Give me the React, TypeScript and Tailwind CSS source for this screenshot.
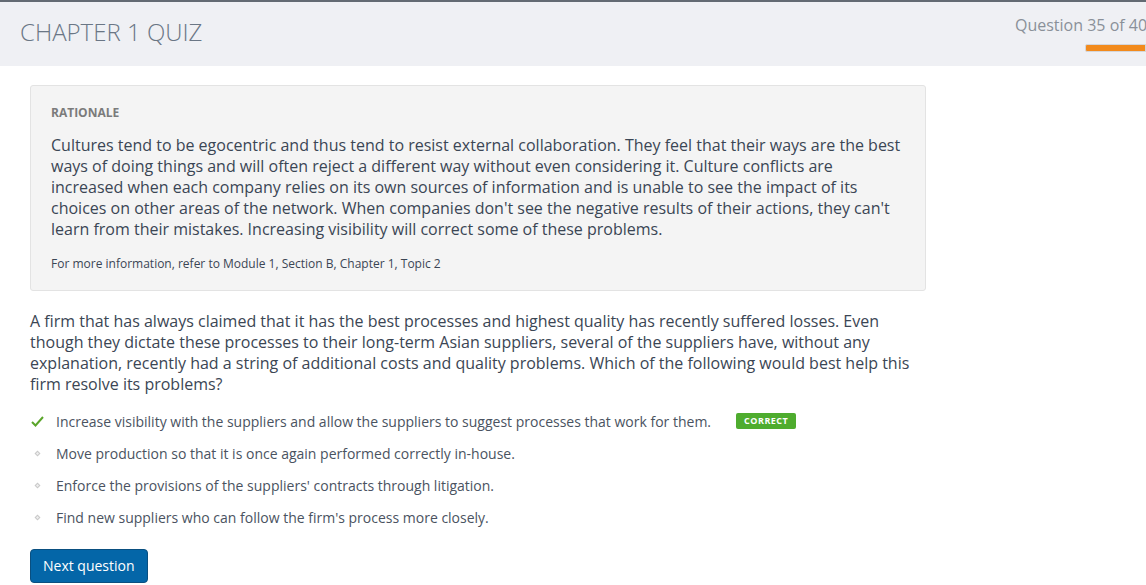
import React from "react";

const options = [
  { text: "Increase visibility with the suppliers and allow the suppliers to suggest processes that work for them.", correct: true },
  { text: "Move production so that it is once again performed correctly in-house.", correct: false },
  { text: "Enforce the provisions of the suppliers' contracts through litigation.", correct: false },
  { text: "Find new suppliers who can follow the firm's process more closely.", correct: false },
];

function Check() {
  return (
    <svg width="13" height="11" viewBox="0 0 13 11">
      <path d="M1 6 L4.5 9.5 L12 1" fill="none" stroke="#5aa52a" strokeWidth="2" />
    </svg>
  );
}

function Dot() {
  return (
    <svg width="7" height="7" viewBox="0 0 7 7">
      <path d="M3.5 0.5 L6.5 3.5 L3.5 6.5 L0.5 3.5 Z" fill="#c9c9c9" />
      <path d="M3.5 2 L5 3.5 L3.5 5 L2 3.5 Z" fill="#f0f0f0" />
    </svg>
  );
}

export default function App() {
  return (
    <div className="w-[1146px] h-[585px] overflow-hidden bg-white" style={{ fontFamily: '"Open Sans", sans-serif' }}>
      <header className="h-[66px] border-t-2 border-[#636a73] bg-[#eff0f4] flex justify-between overflow-hidden">
        <h1 className="pl-[20px] pt-[14px] text-[24px] font-light leading-[32px] text-[#6a7685]">CHAPTER 1 QUIZ</h1>
        <div className="w-[131px] shrink-0 pt-[12px] overflow-hidden">
          <div className="whitespace-nowrap text-[16px] leading-[22px] text-[#8a9099]">Question 35 of 40</div>
          <div className="ml-[70px] mt-[8px] h-[8px] bg-[#f28a1c] border border-[#d4d6da] rounded-l-[2px]" />
        </div>
      </header>

      <main className="px-[30px] pt-[19px]">
        <section className="w-[896px] bg-[#f4f4f4] border border-[#e3e3e3] rounded-[3px] pl-[20px] pr-[16px] pt-[19px] pb-[18px]">
          <div className="text-[12px] font-bold text-[#7b7b7b] leading-[16px]">RATIONALE</div>
          <p className="mt-[14px] text-[16px] leading-[21px] text-[#3b4654]">
            Cultures tend to be egocentric and thus tend to resist external collaboration. They feel that their ways are the best ways of doing things and will often reject a different way without even considering it. Culture conflicts are increased when each company relies on its own sources of information and is unable to see the impact of its choices on other areas of the network. When companies don't see the negative results of their actions, they can't learn from their mistakes. Increasing visibility will correct some of these problems.
          </p>
          <p className="mt-[16px] text-[12px] leading-[16px] text-[#3b4654]">For more information, refer to Module 1, Section B, Chapter 1, Topic 2</p>
        </section>

        <p className="mt-[20px] w-[890px] text-[16px] leading-[21px] text-[#3b4654]">
          A firm that has always claimed that it has the best processes and highest quality has recently suffered losses. Even though they dictate these processes to their long-term Asian suppliers, several of the suppliers have, without any explanation, recently had a string of additional costs and quality problems. Which of the following would best help this firm resolve its problems?
        </p>

        <ul className="mt-[16px] flex flex-col gap-[12px]">
          {options.map((o, i) => (
            <li key={i} className="flex items-center h-[20px] text-[14px] text-[#4a5361]">
              <span className="w-[26px] flex justify-start pl-[1px]">{o.correct ? <Check /> : <span className="pl-[3px] flex"><Dot /></span>}</span>
              <span>{o.text}</span>
              {o.correct && (
                <span className="ml-[25px] h-[16px] px-[8px] flex items-center rounded-[2px] bg-[#4eac2e] text-white text-[9px] font-bold tracking-[0.5px]">CORRECT</span>
              )}
            </li>
          ))}
        </ul>

        <button className="mt-[22px] h-[34px] px-[12px] rounded-[4px] bg-[#0466a8] border border-[#0a4f80] text-white text-[14px] leading-[20px]">Next question</button>
      </main>
    </div>
  );
}
